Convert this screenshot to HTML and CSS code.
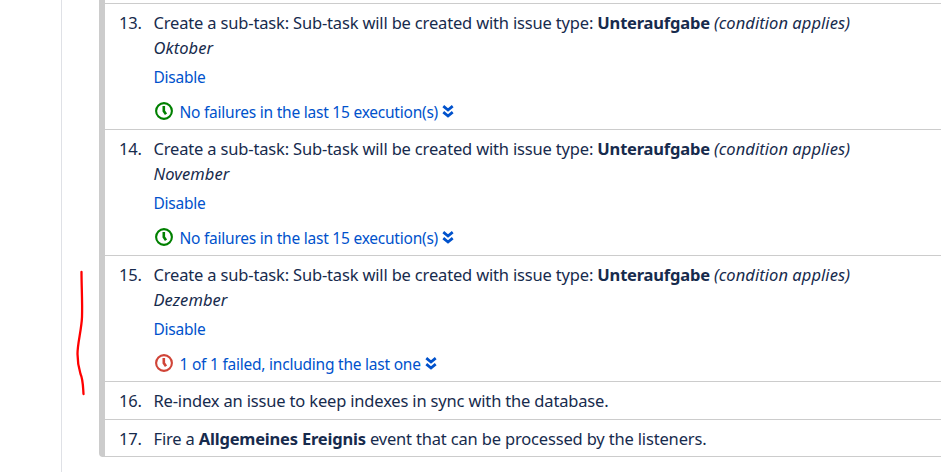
FILE: index.html
```
<!DOCTYPE html>
<html lang="en">
<head>
<meta charset="utf-8">
<title>Post functions</title>
<link rel="stylesheet" href="styles.css">
</head>
<body>
<svg class="symbols" width="0" height="0">
  <symbol id="clock" viewBox="0 0 18 18"><circle cx="9" cy="9" r="7.900" fill="none" stroke="currentColor" stroke-width="2.100"/><path d="M8.800 4v5l2.200 3.200" fill="none" stroke="currentColor" stroke-width="2.600"/></symbol>
  <symbol id="expand" viewBox="0 0 12 13"><path d="M1.300 1.200 6 5l4.700-3.800M1.300 7.200 6 11l4.700-3.800" fill="none" stroke="currentColor" stroke-width="2.800"/></symbol>
</svg>
<main class="panel">
  <svg class="marker" width="10" height="128" viewBox="0 0 10 128"><path d="M5.500 2C5.500 16 6.500 33 6 47C5.500 60 1.500 73 1.500 84C1.500 91 3 99 4.500 104C7 109 7 117 7.500 124" fill="none" stroke="#f00" stroke-width="2.300" stroke-linecap="round" stroke-linejoin="round"/></svg>
  <ol class="functions">
    <li class="item">
      <span class="number">13.</span>
      <div class="content">
        <p>Create a sub-task: Sub-task will be created with issue type: <b>Unteraufgabe</b> <i>(condition applies)</i></p>
        <p><i>Oktober</i></p>
        <p class="action"><a>Disable</a></p>
        <p class="status"><svg class="clock ok"><use href="#clock"/></svg><a>No failures in the last 15 execution(s)</a><svg class="expand"><use href="#expand"/></svg></p>
      </div>
    </li>
    <li class="item">
      <span class="number">14.</span>
      <div class="content">
        <p>Create a sub-task: Sub-task will be created with issue type: <b>Unteraufgabe</b> <i>(condition applies)</i></p>
        <p><i>November</i></p>
        <p class="action"><a>Disable</a></p>
        <p class="status"><svg class="clock ok"><use href="#clock"/></svg><a>No failures in the last 15 execution(s)</a><svg class="expand"><use href="#expand"/></svg></p>
      </div>
    </li>
    <li class="item">
      <span class="number">15.</span>
      <div class="content">
        <p>Create a sub-task: Sub-task will be created with issue type: <b>Unteraufgabe</b> <i>(condition applies)</i></p>
        <p><i>Dezember</i></p>
        <p class="action"><a>Disable</a></p>
        <p class="status"><svg class="clock failed"><use href="#clock"/></svg><a>1 of 1 failed, including the last one</a><svg class="expand"><use href="#expand"/></svg></p>
      </div>
    </li>
    <li class="item short">
      <span class="number">16.</span>
      <div class="content"><p>Re-index an issue to keep indexes in sync with the database.</p></div>
    </li>
    <li class="item last">
      <span class="number">17.</span>
      <div class="content"><p>Fire a <b>Allgemeines Ereignis</b> event that can be processed by the listeners.</p></div>
    </li>
  </ol>
</main>
</body>
</html>
```
FILE: styles.css
```
* { box-sizing: border-box; }
body {
  margin: 0;
  background: #fff;
  color: #172b4d;
  font: 16.5px/25px "Noto Sans", "Open Sans", sans-serif;
  letter-spacing: -0.17px;
  overflow: hidden;
}
.symbols { display: none; }
.panel {
  position: relative;
  height: 472px;
  margin-left: 61px;
  padding-left: 37px;
  border-left: 1px solid #dfe1e6;
}
.marker { position: absolute; left: 14px; top: 270px; }
.functions {
  margin: 0;
  padding: 3px 0 0;
  list-style: none;
  border-left: 6px solid #ccc;
  border-bottom: 1px solid #ccc;
  border-bottom-left-radius: 4px;
}
.item {
  display: flex;
  padding: 6px 0 4px 14px;
  border-top: 1px solid #ccc;
}
.item.short { padding-bottom: 6px; }
.item.last { padding-bottom: 5px; }
.number { flex: 0 0 34.5px; }
.content { white-space: nowrap; }
p { margin: 0; }
b { letter-spacing: -0.2px; }
i { letter-spacing: 0.06px; }
a { color: #0052cc; font-size: 15.5px; letter-spacing: -0.23px; }
.action { margin-top: 4px; }
.status {
  display: flex;
  align-items: center;
  margin-top: 10px;
}
.clock { width: 18px; height: 18px; margin: -3px 7px 0 1px; }
.expand { width: 12px; height: 13px; margin: -3px 0 0 4px; color: #0052cc; }
.ok { color: #008000; }
.failed { color: #d04437; }
```
